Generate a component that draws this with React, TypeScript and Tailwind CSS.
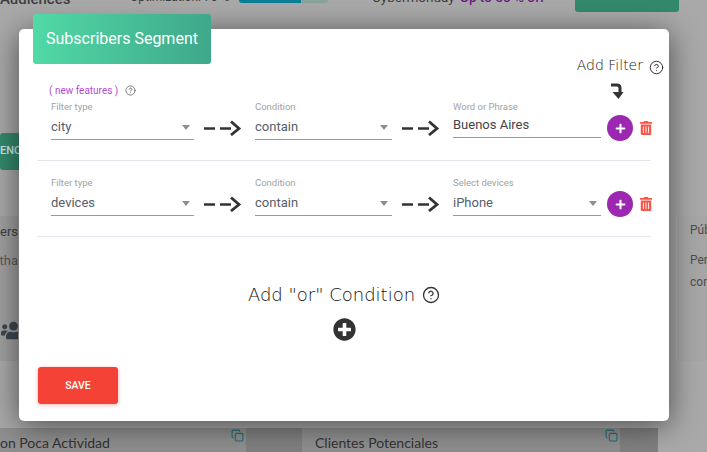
import { CircleHelp, Copy } from 'lucide-react'
import { FaPlus, FaPlusCircle, FaTrashAlt, FaUsers } from 'react-icons/fa'

const rows = [
  { type: 'city', thirdLabel: 'Word or Phrase', third: 'Buenos Aires', select: false },
  { type: 'devices', thirdLabel: 'Select devices', third: 'iPhone', select: true },
]

function Caret() {
  return <span className="mr-[4px] h-0 w-0 border-x-[4.5px] border-t-[5px] border-x-transparent border-t-[#8a8f96]" />
}

function Field({ label, value, width, select = true }: { label: string; value: string; width: string; select?: boolean }) {
  return (
    <div className={`${width} shrink-0`}>
      <div className="h-[13px] text-[9.5px] leading-[13px] text-[#a2a2a2]">{label}</div>
      <div className={`flex items-center justify-between border-b border-[#9a9a9a] text-[13px] ${select ? 'h-[27px] pt-[2px] text-[#555e6b]' : 'h-[25px] pb-[1px] text-[#444]'}`}>
        <span>{value}</span>
        {select && <Caret />}
      </div>
    </div>
  )
}

function Arrow() {
  return (
    <svg className="mt-[20px] mr-[13px] ml-[10px] shrink-0" width="38" height="16" viewBox="0 0 38 16" fill="none" stroke="#333" strokeWidth="2.6">
      <path d="M0 8.5h11M16 8.5h11" />
      <path d="M27 1.5l8 7-8 6.5" strokeWidth="2.8" />
    </svg>
  )
}

function BackgroundPage() {
  return (
    <div className="flex h-[452px] flex-col overflow-hidden bg-[#a9a9a9] font-['Roboto',sans-serif] text-[#3f3f3f]">
      <div className="flex h-[12px] items-start">
        <div className="-mt-[9px] w-[130px] text-[15px] leading-[16px] font-medium">Audiences</div>
        <div className="-mt-[8px] w-[109px] text-[12px] leading-[11px]">Optimization: 70 %</div>
        <div className="flex h-[3px] w-[89px] overflow-hidden rounded-b-full bg-[#8aa39c]">
          <div className="w-[62px] bg-[#0c7f96]" />
        </div>
        <div className="-mt-[8px] ml-[44px] w-[203px] text-[13.5px] leading-[11px]">
          Cybermonday <span className="ml-[2px] font-medium text-[#6b1a86]">Up to 50 % off</span>
        </div>
        <div className="h-[12px] w-[104px] rounded-b-[3px] bg-[#34896d]" />
      </div>
      <div className="mt-[121px] flex h-[37px] w-[60px] items-center rounded-[3px] bg-[#34896d] text-[11px] font-medium text-[#d9e8e2]">ENC</div>
      <div className="mt-[46px] flex h-[145px] justify-between">
        <div className="flex w-[18px] flex-col overflow-hidden bg-[#a0a0a0] pt-[8px] text-[13px] whitespace-nowrap">
          <div className="flex justify-end leading-[15px]">ers</div>
          <div className="mt-[14px] flex justify-end leading-[15px] text-[#5a5a5a]">s tha</div>
          <FaUsers className="mt-[50px] ml-[1px] shrink-0 text-[#3d4651]" size={25} />
        </div>
        <div className="w-[31px] overflow-hidden border-l border-[#b2b2b2] bg-[#a6a6a6] pt-[7px] pl-[13px] text-[12px] whitespace-nowrap text-[#4d4d4d]">
          <div className="leading-[15px]">Púb</div>
          <div className="mt-[11px] leading-[22px]">Per</div>
          <div className="leading-[22px]">con</div>
        </div>
      </div>
      <div className="mt-[67px] flex flex-1 bg-[#808080] font-['Lato',sans-serif] text-[14px] text-[#333]">
        <div className="relative flex w-[246px] items-start bg-[#8f8f8f] pt-[6px]">
          <span className="leading-[17px]">on Poca Actividad</span>
          <Copy size={13} className="absolute top-[1px] right-[2px] text-[#1c6f7f]" />
        </div>
        <div className="relative ml-[56px] flex w-[318px] items-start bg-[#8f8f8f] pt-[6px] pl-[13px]">
          <span className="leading-[17px]">Clientes Potenciales</span>
          <Copy size={13} className="absolute top-[1px] right-[2px] text-[#1c6f7f]" />
        </div>
        <div className="ml-[38px] flex-1 bg-[#a9a9a9]" />
      </div>
    </div>
  )
}

export default function App() {
  return (
    <div className="relative h-[452px] w-[707px] overflow-hidden font-['Roboto',sans-serif]">
      <BackgroundPage />

      <div className="absolute top-[29px] left-[19px] h-[392px] w-[650px] rounded-[5px] bg-white shadow-[0_4px_30px_rgba(0,0,0,0.55)]">
        <div className="absolute -top-[15px] left-[14px] flex h-[50px] w-[178px] items-center justify-center rounded-[3px] bg-gradient-to-r from-[#51d9a7] to-[#3fa88a] text-[16px] text-white">
          Subscribers Segment
        </div>

        <div className="flex h-[47px] items-end justify-end pr-[5px] text-[#111]">
          <span className="font-['DejaVu_Sans',sans-serif] text-[14px] font-extralight">Add Filter</span>
          <CircleHelp size={15} strokeWidth={1.6} className="mb-[1px] ml-[6px] text-[#333]" />
        </div>

        <div className="flex h-[23px] items-end justify-end pr-[45px]">
          <svg width="14" height="16" viewBox="0 0 14 16" fill="#333">
            <path d="M1 2h6q3 0 3 3v5" fill="none" stroke="#333" strokeWidth="3" />
            <path d="M2.5 9h11L8.5 16z" />
          </svg>
        </div>

        <div className="-mt-[16px] -mb-[13px] flex h-[15px] items-center pl-[30px] text-[10px] text-[#b44ad0]">
          ( new features )
          <CircleHelp size={11} strokeWidth={1.6} className="ml-[7px] text-[#555]" />
        </div>

        {rows.map((row) => (
          <div key={row.type} className="mx-[18px] flex h-[76px] border-b border-[#e3e5ec] pt-[15px] pl-[14px]">
            <Field label="Filter type" value={row.type} width="w-[143px]" />
            <Arrow />
            <Field label="Condition" value="contain" width="w-[137px]" />
            <Arrow />
            <Field label={row.thirdLabel} value={row.third} width="w-[148px]" select={row.select} />
            <div className="mt-[15px] ml-[6px] flex h-[26px] w-[26px] shrink-0 items-center justify-center rounded-full bg-[#9c27b0] text-white">
              <FaPlus size={11} />
            </div>
            <FaTrashAlt size={14} className="mt-[21px] ml-[6px] shrink-0 text-[#f5574b]" />
          </div>
        ))}

        <div className="mt-[44px] flex items-center justify-center text-[#111]">
          <span className="font-['DejaVu_Sans',sans-serif] text-[18px] font-extralight">Add "or" Condition</span>
          <CircleHelp size={18} strokeWidth={1.7} className="ml-[7px] text-[#333]" />
        </div>

        <div className="mt-[10px] flex justify-center">
          <FaPlusCircle size={23} className="ml-[1px] text-[#333]" />
        </div>

        <button className="mt-[26px] ml-[19px] flex h-[37px] w-[80px] items-center justify-center rounded-[3px] bg-[#f44336] text-[10.5px] font-medium text-white shadow-[0_1px_4px_rgba(244,67,54,0.4)]">
          SAVE
        </button>
      </div>
    </div>
  )
}
